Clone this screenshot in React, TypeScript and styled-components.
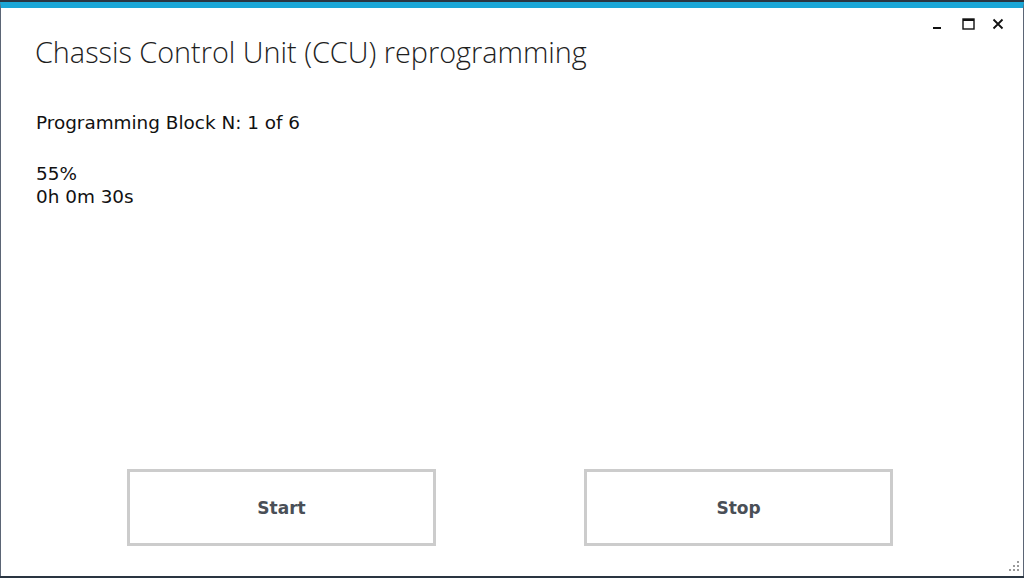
import styled, { createGlobalStyle } from "styled-components";

const GlobalStyle = createGlobalStyle`
    html, body {
        margin: 0;
        padding: 0;
        background: #2a3541;
    }
    * {
        box-sizing: border-box;
    }
`;

const WindowControls = () => (
    <Controls>
        <ControlButton aria-label="minimize">
            <svg width="12" height="12" viewBox="0 0 12 12">
                <rect x="1" y="9" width="8" height="2" fill="#111" />
            </svg>
        </ControlButton>
        <ControlButton aria-label="maximize">
            <svg width="13" height="12" viewBox="0 0 13 12">
                <rect x="1" y="1" width="11" height="10" fill="none" stroke="#111" strokeWidth="1.4" />
                <rect x="1" y="1" width="11" height="2" fill="#111" />
            </svg>
        </ControlButton>
        <ControlButton aria-label="close">
            <svg width="12" height="12" viewBox="0 0 12 12">
                <path d="M1.5 1.5 L10.5 10.5 M10.5 1.5 L1.5 10.5" stroke="#111" strokeWidth="1.8" />
            </svg>
        </ControlButton>
    </Controls>
);

const ResizeGrip = () => (
    <Grip>
        <svg width="14" height="14" viewBox="0 0 14 14">
            {[
                [11, 2],
                [7, 6], [11, 6],
                [3, 10], [7, 10], [11, 10],
            ].map(([x, y]) => (
                <rect key={`${x}-${y}`} x={x} y={y} width="2" height="2" fill="#9a9a9a" />
            ))}
        </svg>
    </Grip>
);

const App = () => {
    return (
        <>
            <GlobalStyle />
            <Window>
                <WindowControls />
                <Title>Chassis Control Unit (CCU) reprogramming</Title>
                <Body>
                    <InfoLine>Programming Block N: 1 of 6</InfoLine>
                    <Progress>
                        <InfoLine>55%</InfoLine>
                        <InfoLine>0h 0m 30s</InfoLine>
                    </Progress>
                </Body>
                <Actions>
                    <ActionButton>Start</ActionButton>
                    <ActionButton>Stop</ActionButton>
                </Actions>
                <ResizeGrip />
            </Window>
        </>
    );
};

const Window = styled.div`
    position: relative;
    margin-top: 2px;
    height: 574px;
    background: white;
    border-top: 6px solid #1ba6d6;
    border-left: 1px solid #5b6575;
    border-right: 1px solid #5b6575;
    display: flex;
    flex-direction: column;
`;

const Controls = styled.div`
    display: flex;
    justify-content: flex-end;
    align-items: center;
    gap: 14px;
    padding: 7px 17px 0 0;
    height: 24px;
`;

const ControlButton = styled.div`
    width: 16px;
    height: 16px;
    display: flex;
    align-items: center;
    justify-content: center;
`;

const Title = styled.h1`
    margin: 1px 0 0 34px;
    font-family: "Open Sans", "Noto Sans", sans-serif;
    font-weight: 300;
    font-size: 28.8px;
    line-height: 38px;
    color: #1e1e1e;
`;

const Body = styled.div`
    padding: 40px 0 0 35px;
    font-family: "DejaVu Sans", sans-serif;
    font-size: 18.4px;
    color: #111;
    flex: 1;
`;

const InfoLine = styled.div`
    line-height: 23px;
`;

const Progress = styled.div`
    margin-top: 28px;
`;

const Actions = styled.div`
    display: flex;
    justify-content: center;
    gap: 148px;
    padding: 0 4px 30px 0;
`;

const ActionButton = styled.button`
    width: 309px;
    height: 77px;
    background: white;
    border: 3px solid #cccccc;
    font-family: "DejaVu Sans", sans-serif;
    font-weight: bold;
    font-size: 17px;
    color: #4a4f57;
    cursor: pointer;
`;

const Grip = styled.div`
    position: absolute;
    right: 3px;
    bottom: 3px;
    line-height: 0;
`;

export default App;
